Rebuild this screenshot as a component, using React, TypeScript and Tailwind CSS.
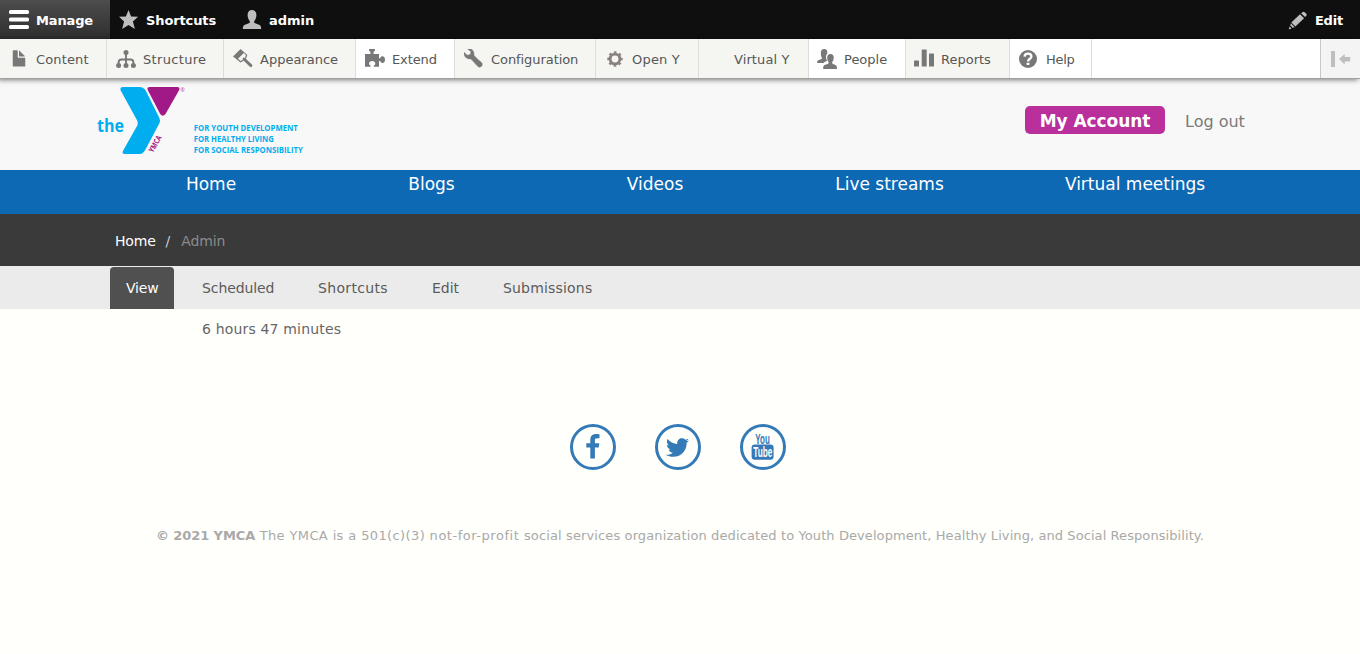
import React from "react";
import { FaTwitter } from "react-icons/fa";

const svg16 = "block size-5 shrink-0";

function HamburgerIcon() {
  return (
    <svg viewBox="0 0 20 20" className="block size-5 shrink-0 fill-white">
      <rect x="0" y="0" width="20" height="4" rx="1.6" />
      <rect x="0" y="7.5" width="20" height="4" rx="1.6" />
      <rect x="0" y="15" width="20" height="4" rx="1.6" />
    </svg>
  );
}

function StarIcon() {
  return (
    <svg viewBox="0 0 20 20" className="block size-5 shrink-0 fill-[#bebebe]">
      <path d="M9.500 0l2.600 6.500 7 .3-5.200 4.600 2 7.600-6.400-3.900L3.100 19l2-7.600L0 6.800l6.900-.3z" />
    </svg>
  );
}

function PersonIcon() {
  return (
    <svg viewBox="0 0 20 20" className="block size-5 shrink-0 fill-[#bebebe]">
      <path d="M10 0c3 0 4.400 2 4.400 5 0 2.300-.8 4.500-2 5.900-.5.6-.4 1.700.2 2.100 1.200.8 4.700 1.500 5.700 2.500.6.600.9 2.600.9 3.500H.8c0-.9.3-2.900.9-3.500 1-1 4.500-1.700 5.700-2.500.6-.4.7-1.500.2-2.100-1.200-1.400-2-3.600-2-5.900C5.600 2 7 0 10 0z" />
    </svg>
  );
}

function PencilIcon() {
  return (
    <svg viewBox="0 0 20 20" className="block size-5 shrink-0 fill-[#bebebe]">
      <path d="M14.200 2.400c.8-.8 1.900-.8 2.700 0l1.200 1.200c.7.7.7 1.800 0 2.500l-1 1-4-3.900zM12 4.200l4.100 4.100-8.700 8.200-4.100-4.100zM2.800 13.300l3.900 3.900-2 .5-2.400-2.300zM1.700 16.600l1.900 1.800-2.300.8c-.4.1-.6-.1-.5-.5z" />
    </svg>
  );
}

function FileIcon() {
  return (
    <svg viewBox="0 0 16 16" className={svg16}>
      <path d="M12.502 7h-5c-.276 0-.502-.225-.502-.5v-5c0-.275-.225-.5-.5-.5h-3c-.275 0-.5.225-.5.5v12.029c0 .275.225.5.5.5h9.002c.275 0 .5-.225.5-.5v-6.029c0-.275-.225-.5-.5-.5zM8.502 6h4c.275 0 .34-.159.146-.354l-4.293-4.292c-.195-.195-.353-.129-.353.146v4c0 .275.225.5.5.5z" />
    </svg>
  );
}

function StructureIcon() {
  return (
    <svg viewBox="0 0 20 20" className={svg16}>
      <circle cx="10" cy="3.600" r="2.500" />
      <circle cx="2.600" cy="16.500" r="2.500" />
      <circle cx="10" cy="16.500" r="2.500" />
      <circle cx="17.400" cy="16.500" r="2.500" />
      <path d="M10 4v13M2.600 17v-3.500q0-3 3-3h8.800q3 0 3 3V17" fill="none" stroke="currentColor" strokeWidth="1.900" />
    </svg>
  );
}

function AppearanceIcon() {
  return (
    <svg viewBox="0 0 20 20" className={svg16}>
      <path d="M7.500 0L14.300 5.900 13.300 9 10.500 11.700 7.600 13.400 0 7.500zM10.800 4L5 9.700 7.700 12 9.900 10.700 12.200 8.500 12.900 6z" fillRule="evenodd" />
      <path d="M11 10l6.900 6.600" stroke="currentColor" strokeWidth="2.900" strokeLinecap="round" />
    </svg>
  );
}

function ExtendIcon() {
  return (
    <svg viewBox="0 1 20 20" className={svg16}>
      <path d="M0 6h5.500V3.800C4.500 3.500 4 2.800 4 1.800V1h6v.8c0 1-.5 1.700-1.500 2V6H14v4.200h1.200c.3-1.400 1.200-2 2.300-2 1.600 0 2.500 1.400 2.500 3.400s-.9 3.400-2.500 3.400c-1.100 0-2-.7-2.300-2H14v5.700H8.800v-1.200c1-.4 1.500-1.100 1.500-2 0-1.500-1.300-2.600-3.100-2.600s-3.100 1.100-3.100 2.600c0 .9.500 1.600 1.500 2v1.200H0z" />
    </svg>
  );
}

function WrenchIcon() {
  return (
    <svg viewBox="1 .8 20 20" className={svg16}>
      <path d="M4.300.6c3-.7 5.800.7 6.500 3.500.2 1 .1 2 .2 2.700.2 1 1.200 1.700 7.300 7.300 1.100 1 1.400 2.600.5 3.800-1.100 1.500-2.900 1.400-4.100.2-5.800-6.300-6.400-7.100-7.400-7.300-.7-.1-1.700 0-2.800-.5C1.900 9.400.5 6.600 1 4.100L4.200 7l3.100-.7.6-3.100z" stroke="currentColor" strokeWidth=".4" />
    </svg>
  );
}

function GearIcon() {
  return (
    <svg viewBox="0 0 20 20" className="block size-5 shrink-0">
      <g fill="none" stroke="#8a8280">
        <circle cx="10" cy="10" r="4.900" strokeWidth="2.900" />
        <circle cx="10" cy="10" r="6.700" strokeWidth="2" strokeDasharray="2.630 2.630" strokeDashoffset="1.310" />
      </g>
    </svg>
  );
}

function PeopleIcon() {
  return (
    <svg viewBox="0 1 20 20" className={svg16}>
      <path d="M7.200 1c2 0 3.100 1.300 3.100 3.100 0 .6 0 1.100-.2 1.700-.8.900-1.200 2-1.100 3.400.1 1.400.5 2.700 1.200 3.800-1.400.5-2.700.7-3.700 1.900H.1c0-1 .2-2 .8-2.500.9-.7 2.900-.8 3.600-1.400.6-.5.5-1.200.1-1.800C4 8.100 3.700 6 3.900 4 4.100 2.200 5.200 1 7.200 1z" />
      <path d="M13.500 6c2.200 0 3.200 1.400 3.200 3.400 0 1.600-.4 3.300-1.300 4.400-.5.7-.3 1.500.3 1.900.9.600 2.700.9 3.500 1.700.6.600.8 2 .8 3.500H6.200c0-1.500.1-2.900.7-3.500.8-.8 3.100-1.100 4.200-1.700.6-.4.8-1.200.3-1.900-.8-1.100-1.200-2.800-1.200-4.400 0-2 1-3.400 3.300-3.400z" />
    </svg>
  );
}

function ReportsIcon() {
  return (
    <svg viewBox="0 0.500 20 20" className={svg16}>
      <rect x="0" y="12" width="5" height="6" rx=".5" />
      <rect x="7.700" y="1" width="5" height="17" rx=".5" />
      <rect x="15" y="5" width="5" height="13" rx=".5" />
    </svg>
  );
}

function HelpIcon() {
  return (
    <svg viewBox="0 0 20 20" className={svg16}>
      <circle cx="10" cy="10" r="9" />
      <path d="M6.600 7.600C6.700 5.600 8 4.600 10 4.600s3.400 1 3.400 2.800c0 2.400-3.300 2.400-3.300 5" fill="none" stroke="#fff" strokeWidth="2.300" />
      <rect x="8.700" y="13.700" width="2.700" height="2.400" rx=".5" fill="#fff" />
    </svg>
  );
}

const trayItems = [
  { label: "Content", box: "w-[107px] gap-[7px] pl-[9px] bg-[#f5f5f2] tracking-[0.14px]", icon: <FileIcon /> },
  { label: "Structure", box: "w-[117px] gap-[7px] pl-[9px] bg-[#f5f5f2] tracking-[0.33px]", icon: <StructureIcon /> },
  { label: "Appearance", box: "w-[132px] gap-[7px] pl-[9px] bg-[#f5f5f2]", icon: <AppearanceIcon /> },
  { label: "Extend", box: "w-[99px] gap-[7px] pl-[9px] bg-white tracking-[-0.1px]", icon: <ExtendIcon /> },
  { label: "Configuration", box: "w-[141px] gap-[7px] pl-[9px] bg-[#f5f5f2] tracking-[-0.07px]", icon: <WrenchIcon /> },
  { label: "Open Y", box: "w-[103px] gap-[7px] pl-[9px] bg-[#f5f5f2] tracking-[0.2px]", icon: <GearIcon /> },
  { label: "Virtual Y", box: "w-[110px] gap-[7px] pl-2 bg-[#f5f5f2] tracking-[0.1px]", icon: null },
  { label: "People", box: "w-[97px] gap-[7px] pl-2 bg-white", icon: <PeopleIcon /> },
  { label: "Reports", box: "w-[104px] gap-[7px] pl-2 bg-[#f5f5f2]", icon: <ReportsIcon /> },
  { label: "Help", box: "w-[82px] gap-2 pl-2 bg-white tracking-[-0.3px]", icon: <HelpIcon /> },
];

function AdminBar() {
  return (
    <div className="flex h-[39px] bg-[#0f0f0f] text-[13px] font-bold leading-[39px] text-white">
      <a className="flex w-[110px] items-center gap-[7px] bg-linear-to-b from-[#4d4d4d] to-[#2e2e2e] pl-[9px]">
        <HamburgerIcon />
        <span className="pt-[2px] tracking-[-0.15px]">Manage</span>
      </a>
      <a className="flex w-[123px] items-center gap-[7px] pl-[9px]">
        <StarIcon />
        <span className="pt-[2px] tracking-[-0.12px]">Shortcuts</span>
      </a>
      <a className="flex items-center gap-[7px] pl-[9px]">
        <PersonIcon />
        <span className="pt-[2px]">admin</span>
      </a>
      <a className="ml-auto flex items-center gap-[7px] pr-[17px]">
        <PencilIcon />
        <span className="pt-[2px] tracking-[-0.2px]">Edit</span>
      </a>
    </div>
  );
}

function Tray() {
  return (
    <div className="relative z-10 flex h-10 border-b border-[#a0a09f] bg-white text-[13px] text-[#565656] shadow-[-2px_1px_5px_rgba(0,0,0,0.5)]">
      {trayItems.map((t) => (
        <a key={t.label} className={`flex items-center border-r border-[#dddddd] ${t.box}`}>
          <span className="size-5 text-[#787878] [&_svg]:fill-current">{t.icon}</span>
          <span className="whitespace-nowrap pt-[2px]">{t.label}</span>
        </a>
      ))}
      <button className="ml-auto flex w-10 items-center justify-center border-l border-[#c8c8c8] bg-[#f4f4f4]">
        <svg viewBox="0.500 0 20 16" className="block h-4 w-5 fill-[#bebebe]">
          <rect x="0.500" y="0" width="4" height="16" rx=".6" />
          <path d="M8.500 8l5.700-5v3h5.500v4.400h-5.500v3z" />
        </svg>
      </button>
    </div>
  );
}

function Logo() {
  return (
    <svg viewBox="0 0 230 90" className="block h-[90px] w-[230px]" fontFamily="'Open Sans', sans-serif" fontWeight="700">
      <path d="M38 8H54.500Q58.500 8 60.700 11.500L74.400 39Q75.600 41.800 74.400 44.300L60.500 70.500Q57.800 75 54.500 75H40Q36.300 75 38.200 71.500L52.300 46.500Q53.300 44.200 52.300 41.800L35.700 11.500Q34.500 8 38 8z" fill="#00aeef" />
      <path d="M64.800 8h27.200q3.300 0 2.200 3L80.500 35q-2.700 3.500-5.300 0L62.700 11q-1.100-3 2.100-3z" fill="#a11987" />
      <text x="95.300" y="12.600" fontSize="5.500" fontWeight="400" fill="#b04c9b">®</text>
      <text x="12" y="52.500" fontSize="17.500" fill="#00aeef" textLength="27" lengthAdjust="spacingAndGlyphs">the</text>
      <text transform="translate(68 74) rotate(-60)" fontSize="7.800" fill="#a11987" textLength="18" lengthAdjust="spacingAndGlyphs">YMCA</text>
      <g fontSize="8" fill="#00aeef" fontWeight="700">
        <text x="108.800" y="51.800" textLength="104" lengthAdjust="spacingAndGlyphs">FOR YOUTH DEVELOPMENT</text>
        <text x="108.800" y="63.200" textLength="80" lengthAdjust="spacingAndGlyphs">FOR HEALTHY LIVING</text>
        <text x="108.800" y="74.400" textLength="109" lengthAdjust="spacingAndGlyphs">FOR SOCIAL RESPONSIBILITY</text>
      </g>
    </svg>
  );
}

function SiteHeader() {
  return (
    <header className="flex h-[91px] items-start bg-[#f8f8f8] pl-[85px]">
      <Logo />
      <div className="ml-auto flex items-start gap-5 pr-[115px] pt-[27px]">
        <a className="flex h-7 w-[140px] items-center justify-center rounded-[5px] bg-[#b92f9c] pt-[3px] text-[17px] font-bold tracking-[-0.05px] text-white">
          My Account
        </a>
        <a className="w-[60px] whitespace-nowrap pt-1 text-[16px] text-[#7a7a7a]">Log out</a>
      </div>
    </header>
  );
}

const navItems = [
  { label: "Home", box: "w-[222px]" },
  { label: "Blogs", box: "w-[219px]" },
  { label: "Videos", box: "w-[228px]" },
  { label: "Live streams", box: "w-[241px]" },
  { label: "Virtual meetings", box: "w-[250px]" },
];

function MainNav() {
  return (
    <nav className="flex h-11 bg-[#0d69b4] pl-[100px] text-[17px] leading-[29px] text-white">
      {navItems.map((n) => (
        <a key={n.label} className={`text-center ${n.box}`}>{n.label}</a>
      ))}
    </nav>
  );
}

function FacebookIcon() {
  return (
    <svg viewBox="0 0 14 25" className="mr-px mb-[2px] block h-[25px] w-[14px] fill-current">
      <path d="M13.500.3v3.900h-2.400c-1.800 0-2.200.9-2.200 2.200v2.800h4.400l-.6 4.200H8.900v11.200H4.300V13.400H.3V9.200h4V5.900C4.300 2.200 6.600.1 10 .1c1.600 0 3 .1 3.500.2z" />
    </svg>
  );
}

function YouTubeIcon() {
  return (
    <svg viewBox="0 0 40 40" className="block size-10 shrink-0 overflow-visible" fontFamily="'Liberation Sans Narrow', 'Liberation Sans', sans-serif" fontWeight="700">
      <text x="12.300" y="16.500" fontSize="14.500" fill="#337ab7" textLength="14.500" lengthAdjust="spacingAndGlyphs">You</text>
      <rect x="8.600" y="17.600" width="22" height="15.200" rx="3.200" fill="#337ab7" />
      <text x="10.300" y="30.300" fontSize="14.500" fill="#fffffb" textLength="19" lengthAdjust="spacingAndGlyphs">Tube</text>
    </svg>
  );
}

const ring = "flex size-[46px] items-center justify-center rounded-full border-3 border-[#337ab7] text-[#337ab7]";

export default function App() {
  return (
    <div className="flex h-[654px] w-[1360px] flex-col overflow-hidden bg-[#fffffb] font-['DejaVu_Sans',Verdana,sans-serif]">
      <AdminBar />
      <Tray />
      <SiteHeader />
      <MainNav />
      <div className="flex h-[52px] items-center gap-[10px] bg-[#3a3a3a] pl-[115px] pt-[2px] text-[14px]">
        <a className="tracking-[-0.2px] text-white">Home</a>
        <span className="text-[#cccccc]">/</span>
        <span className="pl-px tracking-[-0.1px] text-[#8b8b8b]">Admin</span>
      </div>
      <div className="flex h-[43px] items-end bg-[#ebebeb] pl-[110px] text-[14px] leading-[42px] text-[#5b5b5b]">
        <a className="h-[42px] w-16 rounded-t-[4px] bg-[#505050] pl-4 tracking-[-0.2px] text-white">View</a>
        <a className="h-[42px] w-[116px] pl-7 tracking-[-0.1px]">Scheduled</a>
        <a className="h-[42px] w-[114px] pl-7 tracking-[0.33px]">Shortcuts</a>
        <a className="h-[42px] w-[71px] pl-7">Edit</a>
        <a className="h-[42px] pl-7 tracking-[0.18px]">Submissions</a>
      </div>
      <main className="pl-[202px] pt-[10px] text-[14px] leading-5 tracking-[0.17px] text-[#666666]">6 hours 47 minutes</main>
      <footer className="flex flex-col items-center pt-[85px]">
        <div className="flex w-[220px] gap-[39px]">
          <a className={ring}><FacebookIcon /></a>
          <a className={ring}><FaTwitter size={23} className="mr-px" /></a>
          <a className={ring}><YouTubeIcon /></a>
        </div>
        <p className="pt-[56px] text-[13px] leading-5 whitespace-nowrap text-[#a9a9a9]">
          <b className="tracking-[-0.1px]">© 2021 YMCA</b>
          <span className="tracking-[0.38px]"> The YMCA is a 501(c)(3) </span>
          <span className="tracking-[0.53px]">not-for-profit </span>
          <span className="tracking-[0.12px]">social services organization dedicated to </span>
          <span className="tracking-[0.08px]">Youth Development, Healthy Living, and Social Responsibility.</span>
        </p>
      </footer>
    </div>
  );
}
